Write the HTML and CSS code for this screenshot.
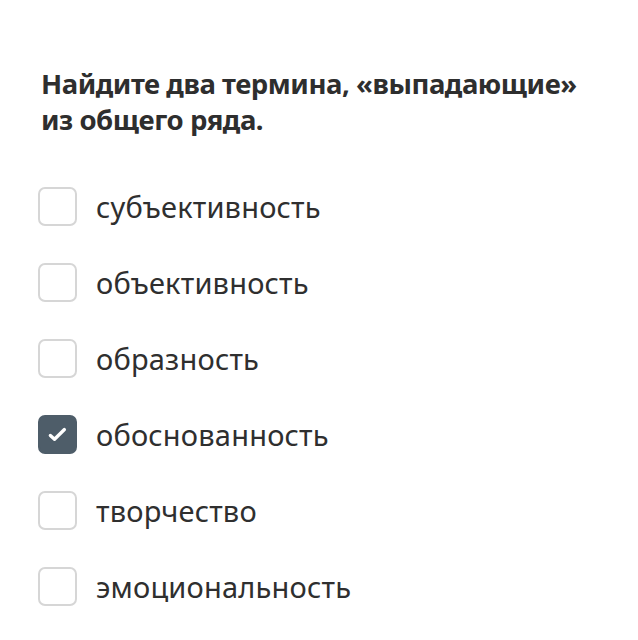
FILE: index.html
```html
<!DOCTYPE html>
<html lang="ru">
<head>
  <meta charset="UTF-8" />
  <meta name="viewport" content="width=device-width, initial-scale=1.0" />
  <title>Задание</title>
  <link rel="stylesheet" href="styles.css">
</head>
<body>
  <div class="task">
    <h1>Найдите два термина, «выпадающие»<br>из общего ряда.</h1>
    <ul class="options">
      <li class="option"><span class="box"></span><span class="label">субъективность</span></li>
      <li class="option"><span class="box"></span><span class="label">объективность</span></li>
      <li class="option"><span class="box"></span><span class="label">образность</span></li>
      <li class="option checked">
        <span class="box">
          <svg viewBox="0 0 20 20" width="23" height="23"><path d="M3.8 10.8l3.6 3.3 8.6-8.4" fill="none" stroke="#fff" stroke-width="2.9" stroke-linecap="round" stroke-linejoin="round"/></svg>
        </span>
        <span class="label">обоснованность</span>
      </li>
      <li class="option"><span class="box"></span><span class="label">творчество</span></li>
      <li class="option"><span class="box"></span><span class="label">эмоциональность</span></li>
    </ul>
  </div>
</body>
</html>
```

FILE: styles.css
```css
* { box-sizing: border-box; }
body {
  margin: 0;
  background: #fff;
  color: #2b2b2b;
  font-family: 'Noto Sans', sans-serif;
}
.task {
  padding: 66px 20px 0 41px;
}
h1 {
  margin: 0 0 49px;
  font-size: 27.5px;
  line-height: 36px;
  font-weight: 700;
  color: #2e2e2e;
  white-space: nowrap;
  letter-spacing: -0.45px;
}
.options {
  list-style: none;
  margin: 0;
  padding: 0;
  display: flex;
  flex-direction: column;
  gap: 37px;
}
.option {
  display: flex;
  align-items: center;
  gap: 19px;
  height: 39px;
}
.box {
  flex: none;
  width: 39px;
  height: 39px;
  border: 2px solid #d6d6d6;
  border-radius: 7px;
  margin-left: -3px;
  display: flex;
  align-items: center;
  justify-content: center;
}
.checked .box {
  background: #4e5d69;
  border-color: #4e5d69;
}
.label {
  font-size: 29px;
  color: #2f2f2f;
  letter-spacing: 0.2px;
}
```
